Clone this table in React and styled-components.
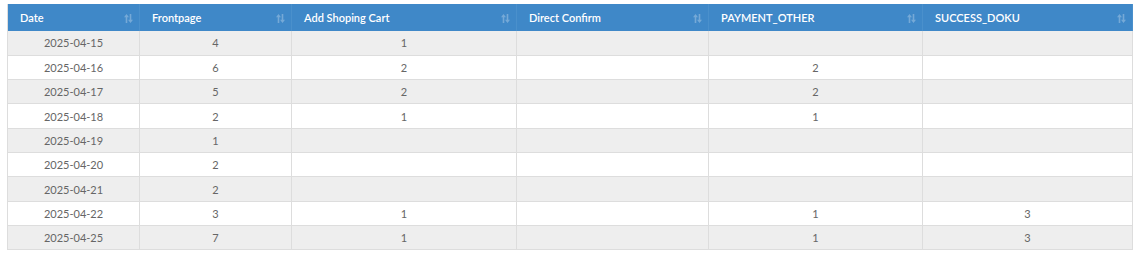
import React from 'react';
import styled, { createGlobalStyle } from 'styled-components';

const GlobalStyle = createGlobalStyle`
  body {
    margin: 0;
    background: #ffffff;
    font-family: 'Lato', 'Liberation Sans', sans-serif;
  }
`;

const Page = styled.div`
  padding: 4px 6px 0 7px;
`;

const Table = styled.table`
  width: 1125px;
  border-collapse: collapse;
  table-layout: fixed;
  font-size: 11px;
  color: #666;
  border-left: 1px solid #ddd;
  border-right: 1px solid #ddd;
`;

const HeadCell = styled.th`
  position: relative;
  height: 27px;
  padding: 0 12px;
  background: #3f88c8;
  color: #fff;
  font-weight: 600;
  text-align: left;
  border-right: 1px solid #4a90cc;
  box-sizing: border-box;
`;

const SortIcon = styled.svg`
  position: absolute;
  right: 6px;
  top: 10px;
  opacity: 0.28;
`;

const Row = styled.tr`
  height: 24.33px;
  background: ${({ $striped }) => ($striped ? '#eeeeee' : '#ffffff')};
`;

const Cell = styled.td`
  padding: 0 8px;
  text-align: center;
  border-right: 1px solid #dddddd;
  border-bottom: 1px solid #dddddd;
`;

const columns = [
  { label: 'Date', width: 132 },
  { label: 'Frontpage', width: 152 },
  { label: 'Add Shoping Cart', width: 225 },
  { label: 'Direct Confirm', width: 192 },
  { label: 'PAYMENT_OTHER', width: 214 },
  { label: 'SUCCESS_DOKU', width: 210 },
];

const rows = [
  ['2025-04-15', '4', '1', '', '', ''],
  ['2025-04-16', '6', '2', '', '2', ''],
  ['2025-04-17', '5', '2', '', '2', ''],
  ['2025-04-18', '2', '1', '', '1', ''],
  ['2025-04-19', '1', '', '', '', ''],
  ['2025-04-20', '2', '', '', '', ''],
  ['2025-04-21', '2', '', '', '', ''],
  ['2025-04-22', '3', '1', '', '1', '3'],
  ['2025-04-25', '7', '1', '', '1', '3'],
];

// up / down arrow pair shown at the right of every header
const Sort = () => (
  <SortIcon width="9" height="9" viewBox="0 0 9 9">
    <path d="M2.5 0 L0 3.2 H1.7 V9 H3.3 V3.2 H5 Z" fill="#fff" />
    <path d="M6.5 9 L9 5.8 H7.3 V0 H5.7 V5.8 H4 Z" fill="#fff" />
  </SortIcon>
);

const App = () => (
  <Page>
    <GlobalStyle />
    <Table>
      <colgroup>
        {columns.map((c) => (
          <col key={c.label} style={{ width: c.width }} />
        ))}
      </colgroup>
      <thead>
        <tr>
          {columns.map((c) => (
            <HeadCell key={c.label}>
              {c.label}
              <Sort />
            </HeadCell>
          ))}
        </tr>
      </thead>
      <tbody>
        {rows.map((r, i) => (
          <Row key={r[0]} $striped={i % 2 === 0}>
            {r.map((v, j) => (
              <Cell key={j}>{v}</Cell>
            ))}
          </Row>
        ))}
      </tbody>
    </Table>
  </Page>
);

export default App;
